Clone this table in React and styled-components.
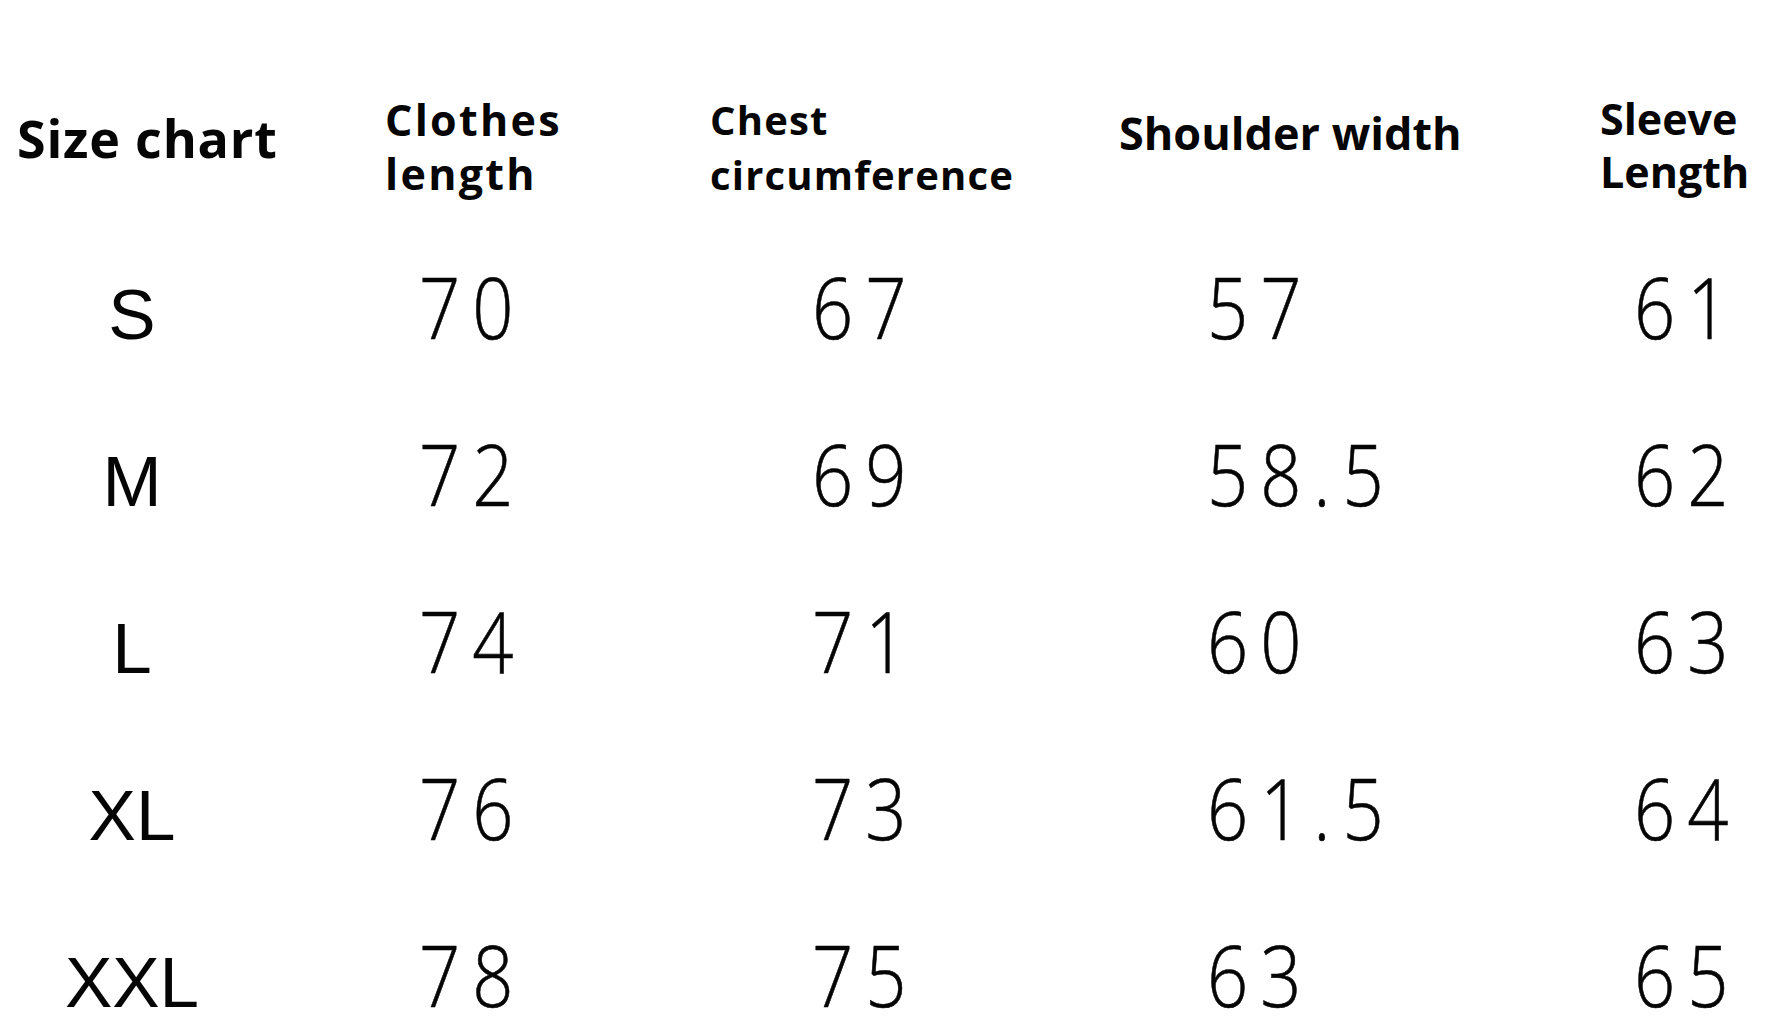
import React from 'react';
import styled, { createGlobalStyle } from 'styled-components';

const GlobalStyle = createGlobalStyle`
  html, body {
    margin: 0;
    padding: 0;
    background: #fff;
    overflow: hidden;
  }
  body {
    font-family: "Liberation Sans", Arial, sans-serif;
    color: #050505;
  }
`;

// column tracks shared by the header and every data row
const COLUMNS = '264px 446px 400px 480px 199px';

const Chart = styled.div`
  width: 1789px;
  background: #fff;
`;

const HeaderRow = styled.div`
  display: grid;
  grid-template-columns: ${COLUMNS};
  height: 226px;
  align-items: start;
`;

const HeadCell = styled.div`
  padding-left: ${(p) => p.$left}px;
  padding-top: ${(p) => p.$top}px;
  font-family: "Open Sans", "Noto Sans", sans-serif;
  font-weight: 700;
  font-size: ${(p) => p.$size}px;
  line-height: ${(p) => p.$lh}px;
  letter-spacing: ${(p) => p.$track || 0}px;
  white-space: nowrap;
`;

const HeadLine = styled.span`
  display: block;
`;

const DataRow = styled.div`
  display: grid;
  grid-template-columns: ${COLUMNS};
  box-sizing: border-box;
  height: 167px;
  padding-top: 35px;
  align-items: baseline;
`;

const SizeCell = styled.div`
  text-align: center;
  font-size: 71px;
  line-height: 90px;
`;

const ValueCell = styled.div`
  padding-left: ${(p) => p.$left}px;
  font-family: "Open Sans", "Liberation Sans", sans-serif;
  font-weight: 300;
  font-size: 85px;
  line-height: 90px;
  white-space: nowrap;
`;

const Digits = styled.span`
  display: inline-block;
  letter-spacing: 14px;
  -webkit-text-stroke: 0.6px currentColor;
  transform: scaleX(0.85);
  transform-origin: left center;
`;

const headers = [
  { lines: ['Size chart'], left: 17, top: 108, size: 52, lh: 60, track: 0.8 },
  { lines: ['Clothes', 'length'], left: 121, top: 93, size: 43, lh: 54, track: 2.3 },
  { lines: ['Chest', 'circumference'], left: -1, top: 92, size: 40, lh: 55, track: 1.2 },
  { lines: ['Shoulder width'], left: 9, top: 105, size: 45, lh: 55 },
  { lines: ['Sleeve', 'Length'], left: 10, top: 92, size: 43, lh: 53 },
];

// left offset of the numbers inside each measurement column
const valueOffsets = [155, 102, 97, 44];

const rows = [
  ['S', '70', '67', '57', '61'],
  ['M', '72', '69', '58.5', '62'],
  ['L', '74', '71', '60', '63'],
  ['XL', '76', '73', '61.5', '64'],
  ['XXL', '78', '75', '63', '65'],
];

const App = () => {
  return (
    <>
      <GlobalStyle />
      <Chart>
        <HeaderRow>
          {headers.map((h) => (
            <HeadCell
              key={h.lines.join(' ')}
              $left={h.left}
              $top={h.top}
              $size={h.size}
              $lh={h.lh}
              $track={h.track}
            >
              {h.lines.map((line) => (
                <HeadLine key={line}>{line}</HeadLine>
              ))}
            </HeadCell>
          ))}
        </HeaderRow>

        {rows.map(([size, ...values]) => (
          <DataRow key={size}>
            <SizeCell>{size}</SizeCell>
            {values.map((v, i) => (
              <ValueCell key={i} $left={valueOffsets[i]}>
                <Digits>{v}</Digits>
              </ValueCell>
            ))}
          </DataRow>
        ))}
      </Chart>
    </>
  );
};

export default App;
